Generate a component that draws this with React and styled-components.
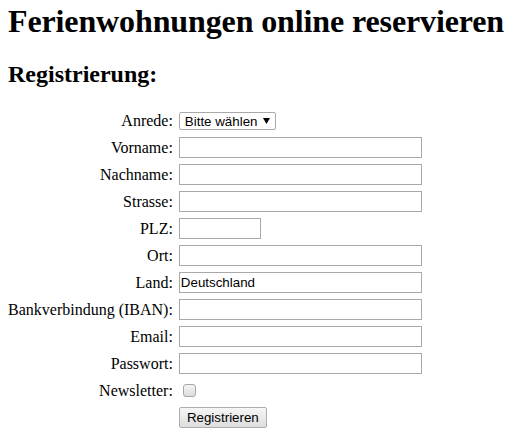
import React from "react";
import styled, { createGlobalStyle } from "styled-components";

const GlobalStyle = createGlobalStyle`
  body {
    margin: 0;
    padding: 0 8px;
    background: #fff;
    color: #000;
    font-family: "Liberation Serif", "Times New Roman", serif;
    font-size: 16px;
  }
`;

const Title = styled.h1`
  margin: 3px 0 0;
  font-size: 32px;
  font-weight: bold;
  line-height: normal;
  letter-spacing: -0.12px;
  white-space: nowrap;
`;

const Subtitle = styled.h2`
  margin: 21px 0 19px;
  font-size: 24px;
  font-weight: bold;
  line-height: normal;
`;

const Form = styled.form`
  display: grid;
  grid-template-columns: max-content max-content;
  grid-auto-rows: 27px;
  column-gap: 6px;
  align-items: center;
`;

const Label = styled.label`
  justify-self: end;
  line-height: normal;
`;

const Field = styled.div`
  display: flex;
  align-items: center;
`;

const TextInput = styled.input`
  box-sizing: border-box;
  width: ${(p) => (p.$short ? "82px" : "243px")};
  height: 21px;
  margin: 0;
  padding: 1px 2px 1px 1px;
  border: 1px solid #a9a9a9;
  background: #fff;
  font-family: "Liberation Sans", Arial, sans-serif;
  font-size: 13.33px;
  color: #000;
  outline: none;
`;

const SelectWrap = styled.span`
  position: relative;
  display: inline-block;
  margin-top: 1px;
`;

const Select = styled.select`
  appearance: none;
  box-sizing: border-box;
  width: 97px;
  height: 18px;
  margin: 0;
  padding: 0 18px 0 5px;
  border: 1px solid #a9a9a9;
  border-radius: 2px;
  background: #fff;
  font-family: "Liberation Sans", Arial, sans-serif;
  font-size: 13.33px;
  color: #000;
  outline: none;
`;

const Arrow = styled.svg`
  position: absolute;
  right: 6px;
  top: 6px;
  pointer-events: none;
`;

const Checkbox = styled.input`
  appearance: none;
  box-sizing: border-box;
  width: 13px;
  height: 13px;
  margin: 0 0 0 4px;
  border: 1px solid #a6a6a6;
  border-radius: 3px;
  background: linear-gradient(#f4f4f4, #dcdcdc);
`;

const Button = styled.button`
  box-sizing: border-box;
  width: 88px;
  height: 21px;
  margin: 0;
  padding: 0;
  border: 1px solid #adadad;
  border-radius: 2px;
  background: linear-gradient(#f6f6f6, #dddddd);
  font-family: "Liberation Sans", Arial, sans-serif;
  font-size: 13.33px;
  color: #000;
`;

const fields = [
  { id: "vorname", label: "Vorname:" },
  { id: "nachname", label: "Nachname:" },
  { id: "strasse", label: "Strasse:" },
  { id: "plz", label: "PLZ:", short: true },
  { id: "ort", label: "Ort:" },
  { id: "land", label: "Land:", value: "Deutschland" },
  { id: "iban", label: "Bankverbindung (IBAN):" },
  { id: "email", label: "Email:" },
  { id: "passwort", label: "Passwort:", type: "password" },
];

export default function App() {
  return (
    <>
      <GlobalStyle />
      <Title>Ferienwohnungen online reservieren</Title>
      <Subtitle>Registrierung:</Subtitle>
      <Form onSubmit={(e) => e.preventDefault()}>
        <Label htmlFor="anrede">Anrede:</Label>
        <Field>
          <SelectWrap>
            <Select id="anrede" defaultValue="">
              <option value="">Bitte wählen</option>
              <option value="herr">Herr</option>
              <option value="frau">Frau</option>
            </Select>
            <Arrow width="7" height="6" viewBox="0 0 7 6">
              <path d="M0 0h7L3.5 6z" fill="#000" />
            </Arrow>
          </SelectWrap>
        </Field>
        {fields.map((f) => (
          <React.Fragment key={f.id}>
            <Label htmlFor={f.id}>{f.label}</Label>
            <Field>
              <TextInput
                id={f.id}
                type={f.type || "text"}
                $short={f.short}
                defaultValue={f.value}
              />
            </Field>
          </React.Fragment>
        ))}
        <Label htmlFor="newsletter">Newsletter:</Label>
        <Field>
          <Checkbox id="newsletter" type="checkbox" />
        </Field>
        <span />
        <Field>
          <Button type="submit">Registrieren</Button>
        </Field>
      </Form>
    </>
  );
}
